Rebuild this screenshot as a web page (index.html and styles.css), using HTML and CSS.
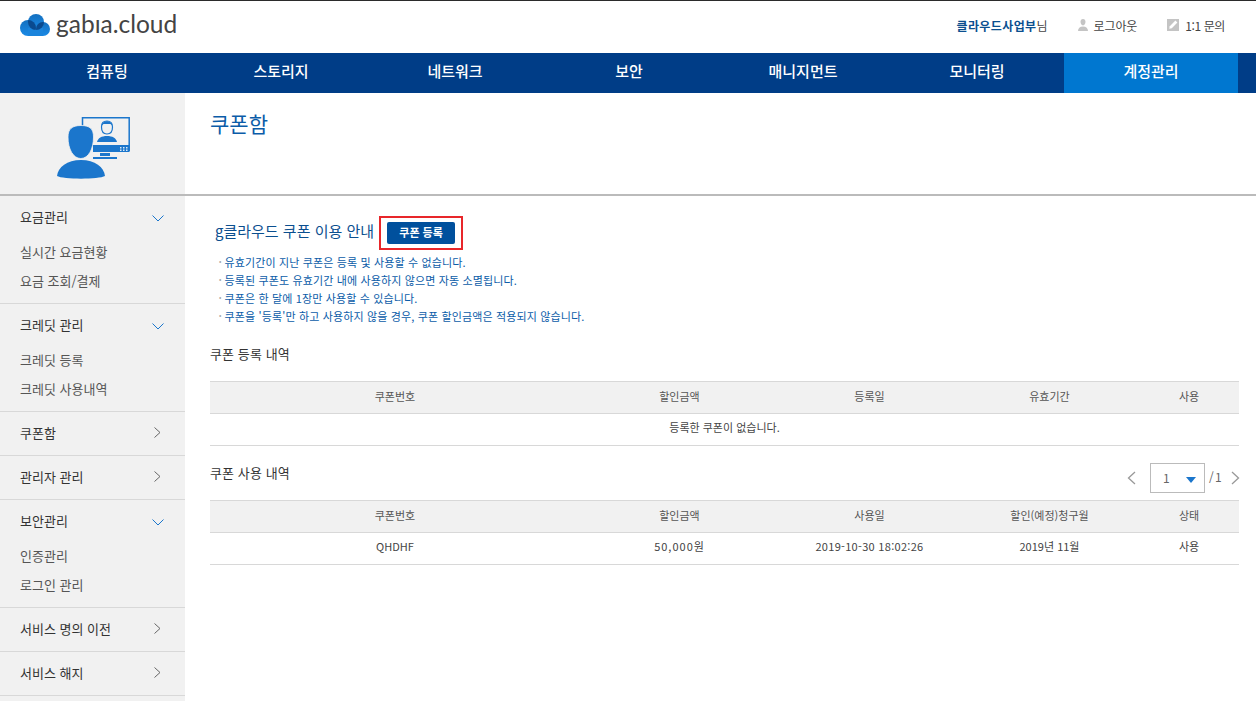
FILE: index.html
```html
<!DOCTYPE html>
<html lang="ko">
    <head>
        <meta charset="utf-8">
        <title>쿠폰함</title>
        <link rel="stylesheet" href="styles.css">
    </head>
    <body>

        <header class="header">
            <a class="logo">
                <svg class="logo-mark" width="30" height="22" viewBox="0 0 30 22">
                    <defs>
                        <linearGradient id="cloudFill" x1="0" y1="0" x2="0" y2="1">
                            <stop offset="0" stop-color="#1470c0"/>
                            <stop offset="1" stop-color="#1a8ae6"/>
                        </linearGradient>
                        <clipPath id="clipLeft"><circle cx="8" cy="14" r="8"/></clipPath>
                        <clipPath id="clipRight"><circle cx="23" cy="15" r="7"/></clipPath>
                    </defs>
                    <circle cx="16" cy="8" r="8" fill="url(#cloudFill)"/>
                    <circle cx="8" cy="14" r="8" fill="url(#cloudFill)"/>
                    <circle cx="23" cy="15" r="7" fill="url(#cloudFill)"/>
                    <rect x="8" y="14" width="15" height="8" fill="#1a84dc"/>
                    <circle cx="16" cy="8" r="8" fill="#0a4a8f" clip-path="url(#clipLeft)"/>
                    <circle cx="16" cy="8" r="8" fill="#0a4a8f" clip-path="url(#clipRight)"/>
                </svg>
                <span class="logo-text">gabıa.cloud</span>
            </a>
            <div class="util">
                <span class="util-user"><b>클라우드사업부</b>님</span>
                <span class="util-link">
                    <svg width="10" height="12" viewBox="0 0 10 12"><path d="M5 0c1.600 0 2.500 1.100 2.500 2.800S6.500 6.500 5 6.500 2.500 4.500 2.500 2.800 3.400 0 5 0zM0 12c0-2.600 1.800-4.600 5-4.600s5 2 5 4.600z" fill="#c4c4c4"/></svg>
                    로그아웃
                </span>
                <span class="util-link tight">
                    <svg width="12" height="12" viewBox="0 0 12 12"><path d="M0 0h12v12H0z" fill="#c4c4c4"/><path d="M2.200 9.800l.6-2.600 5.600-5.600 2 2-5.600 5.600z" fill="#fff"/></svg>
                    1:1 문의
                </span>
            </div>
        </header>

        <nav class="gnb">
            <a>컴퓨팅</a>
            <a>스토리지</a>
            <a>네트워크</a>
            <a>보안</a>
            <a>매니지먼트</a>
            <a>모니터링</a>
            <a class="active">계정관리</a>
        </nav>

        <div class="page-head">
            <div class="page-icon">
                <svg width="73" height="62" viewBox="0 0 73 62">
                    <path d="M25.500 10V.8h46.700V34" fill="none" stroke="#1b76cc" stroke-width="1.500"/>
                    <rect x="36" y="28" width="36.500" height="7" fill="#1b76cc"/>
                    <path d="M63 30h1.500v1.500H63zM66 30h1.500v1.500H66zM69 30h1.500v1.500H69zM63 32.500h1.500V34H63zM66 32.500h1.500V34H66zM69 32.500h1.500V34H69z" fill="#dbe9f6"/>
                    <rect x="43" y="36" width="10" height="3" fill="#1b76cc"/>
                    <rect x="36" y="40" width="24" height="2" fill="#1b76cc"/>
                    <path d="M44.500 10c0-4 1.800-6 5.500-6s5.500 2 5.500 6-1.800 7-5.500 7-5.500-3-5.500-7z" fill="none" stroke="#1b76cc" stroke-width="1.200"/>
                    <path d="M44.500 9c.5-6.500 10.500-6.500 11 0l-2-2h-7z" fill="#1b76cc"/>
                    <path d="M40 25c1-4 4.500-6 10-6s9 2 10 6z" fill="#1b76cc"/>
                    <path d="M11 20c0-8 4-11.500 13-11.500S36.500 12 36.500 20c0 12-5 21.500-12.700 21.500S11 32 11 20z" fill="#1b76cc" stroke="#f1f1f1" stroke-width=".8"/>
                    <path d="M0 59c1-9 10-16 24-16s23 7 24 16c-6 3.500-42 3.500-48 0z" fill="#1b76cc"/>
                </svg>
            </div>
            <h1 class="page-title">쿠폰함</h1>
        </div>

        <div class="body-wrap">
            <aside class="side">
                <div class="side-group">
                    <div class="side-title">요금관리<svg class="arrow" width="12" height="7" viewBox="0 0 12 7"><path d="M.5.500L6 6l5.500-5.500" fill="none" stroke="#1b76cc"/></svg></div>
                    <ul class="side-sub">
                        <li>실시간 요금현황</li>
                        <li>요금 조회/결제</li>
                    </ul>
                </div>
                <div class="side-group">
                    <div class="side-title">크레딧 관리<svg class="arrow" width="12" height="7" viewBox="0 0 12 7"><path d="M.5.500L6 6l5.500-5.500" fill="none" stroke="#1b76cc"/></svg></div>
                    <ul class="side-sub">
                        <li>크레딧 등록</li>
                        <li>크레딧 사용내역</li>
                    </ul>
                </div>
                <div class="side-group">
                    <div class="side-title">쿠폰함<svg class="arrow right" width="7" height="11" viewBox="0 0 7 11"><path d="M.5.500l5.500 5-5.500 5" fill="none" stroke="#666"/></svg></div>
                </div>
                <div class="side-group">
                    <div class="side-title">관리자 관리<svg class="arrow right" width="7" height="11" viewBox="0 0 7 11"><path d="M.5.500l5.500 5-5.500 5" fill="none" stroke="#666"/></svg></div>
                </div>
                <div class="side-group">
                    <div class="side-title">보안관리<svg class="arrow" width="12" height="7" viewBox="0 0 12 7"><path d="M.5.500L6 6l5.500-5.500" fill="none" stroke="#1b76cc"/></svg></div>
                    <ul class="side-sub">
                        <li>인증관리</li>
                        <li>로그인 관리</li>
                    </ul>
                </div>
                <div class="side-group">
                    <div class="side-title">서비스 명의 이전<svg class="arrow right" width="7" height="11" viewBox="0 0 7 11"><path d="M.5.500l5.500 5-5.500 5" fill="none" stroke="#666"/></svg></div>
                </div>
                <div class="side-group">
                    <div class="side-title">서비스 해지<svg class="arrow right" width="7" height="11" viewBox="0 0 7 11"><path d="M.5.500l5.500 5-5.500 5" fill="none" stroke="#666"/></svg></div>
                </div>
            </aside>

            <main class="content">
                <div class="guide-head">
                    <h2 class="guide-title">g클라우드 쿠폰 이용 안내</h2>
                    <div class="btn-mark"><button class="btn">쿠폰 등록</button></div>
                </div>
                <ul class="guide-list">
                    <li>유효기간이 지난 쿠폰은 등록 및 사용할 수 없습니다.</li>
                    <li>등록된 쿠폰도 유효기간 내에 사용하지 않으면 자동 소멸됩니다.</li>
                    <li>쿠폰은 한 달에 1장만 사용할 수 있습니다.</li>
                    <li>쿠폰을 '등록'만 하고 사용하지 않을 경우, 쿠폰 할인금액은 적용되지 않습니다.</li>
                </ul>

                <h3 class="section-title first">쿠폰 등록 내역</h3>
                <table class="list">
                    <thead>
                        <tr>
                            <th class="col-no">쿠폰번호</th>
                            <th class="col-amount">할인금액</th>
                            <th class="col-date">등록일</th>
                            <th class="col-term">유효기간</th>
                            <th>사용</th>
                        </tr>
                    </thead>
                    <tbody>
                        <tr>
                            <td colspan="5">등록한 쿠폰이 없습니다.</td>
                        </tr>
                    </tbody>
                </table>

                <div class="section-row">
                    <h3 class="section-title">쿠폰 사용 내역</h3>
                    <div class="pager">
                        <svg width="9" height="14" viewBox="0 0 9 14"><path d="M8 1L1.500 7 8 13" fill="none" stroke="#999" stroke-width="1.300"/></svg>
                        <div class="pager-select">1<span class="caret"></span></div>
                        <span class="pager-total">/ 1</span>
                        <svg width="9" height="14" viewBox="0 0 9 14"><path d="M1 1l6.500 6L1 13" fill="none" stroke="#999" stroke-width="1.300"/></svg>
                    </div>
                </div>
                <table class="list">
                    <thead>
                        <tr>
                            <th class="col-no">쿠폰번호</th>
                            <th class="col-amount">할인금액</th>
                            <th class="col-date">사용일</th>
                            <th class="col-term">할인(예정)청구월</th>
                            <th>상태</th>
                        </tr>
                    </thead>
                    <tbody>
                        <tr>
                            <td>QHDHF</td>
                            <td class="amount">50,000원</td>
                            <td class="date">2019-10-30 18:02:26</td>
                            <td>2019년 11월</td>
                            <td>사용</td>
                        </tr>
                    </tbody>
                </table>
            </main>
        </div>

    </body>
</html>
```

FILE: styles.css
```css
* {
    box-sizing: border-box;
}
html, body {
    margin: 0;
    height: 701px;
    overflow: hidden;
}
body {
    font-family: "Noto Sans CJK KR", "Noto Sans", sans-serif;
    font-size: 12px;
    color: #444;
    background-color: #fff;
}

/** Header **/
.header {
    display: flex;
    align-items: center;
    justify-content: space-between;
    height: 53px;
    border-top: 1px solid #2b2b2b;
    padding: 0 31px 4px 20px;
}
.logo {
    display: flex;
    align-items: center;
    gap: 6px;
}
.logo-text {
    padding-bottom: 3px;
    font-family: "Lato", sans-serif;
    font-size: 24.5px;
    line-height: 26px;
    color: #444;
}
.util {
    display: flex;
    align-items: center;
    gap: 30px;
    letter-spacing: -0.1px;
}
.util-user b {
    font-weight: 700;
    letter-spacing: 0.4px;
    color: #0b4f8f;
}
.util-link {
    display: flex;
    align-items: center;
    gap: 6px;
}
.util-link.tight {
    letter-spacing: -0.4px;
}

/** Main navigation **/
.gnb {
    display: grid;
    grid-template-columns: repeat(7, 174px);
    height: 40px;
    padding-left: 20px;
    background-color: #003d87;
}
.gnb a {
    font-size: 15px;
    font-weight: 500;
    line-height: 36px;
    text-align: center;
    color: #fff;
}
.gnb a.active {
    background-color: #0077d0;
}

/** Page head **/
.page-head {
    display: flex;
    height: 103px;
    border-bottom: 2px solid #bbb;
}
.page-icon {
    width: 185px;
    padding: 24px 0 0 57px;
    background-color: #f1f1f1;
}
.page-title {
    margin: 12px 0 0 25px;
    font-size: 21px;
    font-weight: 400;
    line-height: 36px;
    color: #0b5ca8;
}

/** Layout **/
.body-wrap {
    display: flex;
    height: 505px;
}

/** Side menu **/
.side {
    flex: none;
    width: 185px;
    background-color: #f1f1f1;
}
.side-group {
    border-bottom: 1px solid #d8d8d8;
}
.side-title {
    display: flex;
    align-items: center;
    justify-content: space-between;
    height: 43px;
    padding: 0 21px 2px 20px;
    font-size: 13px;
    color: #333;
}
.side-title .arrow {
    margin-top: 4px;
}
.side-title .arrow.right {
    margin-top: 0;
    margin-right: 3px;
}
.side-sub {
    list-style-type: none;
    margin: -2px 0 0;
    padding: 0 0 8px 20px;
    font-size: 13px;
    line-height: 29px;
    color: #555;
}

/** Content **/
.content {
    flex: 1;
    padding: 0 17px 0 25px;
}
.guide-head {
    display: flex;
    align-items: center;
    gap: 5px;
    margin: 20px 0 0 5px;
}
.guide-title {
    margin: 0;
    padding-bottom: 6px;
    font-size: 15px;
    font-weight: 400;
    color: #0b4f8f;
}
.btn-mark {
    border: 2px solid #e8262a;
    padding: 4px 6px;
}
.btn {
    display: block;
    width: 68px;
    height: 22px;
    border: 0;
    border-radius: 2px;
    padding: 0 0 2px;
    font-family: inherit;
    font-size: 11px;
    font-weight: 700;
    color: #fff;
    background-color: #00509d;
}
.guide-list {
    list-style-type: none;
    margin: 3px 0 0;
    padding: 0 0 0 9px;
    font-size: 11px;
    line-height: 18px;
    letter-spacing: 0.14px;
    color: #0b5ca8;
}
.guide-list li:before {
    content: "\2022";
    margin-right: 3px;
    color: #aaa;
    font-size: 7px;
    line-height: 0;
    vertical-align: 3px;
}

/** Sections **/
.section-title {
    margin: 0;
    font-size: 13px;
    font-weight: 400;
    letter-spacing: 0.1px;
    color: #333;
}
.section-title.first {
    margin: 19px 0 18px;
}
.section-row {
    display: flex;
    align-items: center;
    justify-content: space-between;
    height: 54px;
    padding-bottom: 2px;
}
.pager {
    display: flex;
    align-items: center;
    margin: 12px -1px 0 0;
    color: #666;
}
.pager-select {
    position: relative;
    width: 55px;
    height: 30px;
    margin: 0 4px 0 14px;
    border: 1px solid #bbb;
    padding-left: 12px;
    line-height: 28px;
}
.caret {
    position: absolute;
    top: 13px;
    right: 8px;
    border-top: 6px solid #1b76cc;
    border-left: 5px solid transparent;
    border-right: 5px solid transparent;
}
.pager-total {
    width: 12px;
    margin-right: 10px;
    padding-bottom: 3px;
    white-space: nowrap;
    word-spacing: -2px;
}

/** Tables **/
.list {
    width: 100%;
    border-collapse: collapse;
    table-layout: fixed;
    font-size: 11px;
}
.list th {
    height: 32px;
    border-top: 1px solid #d8d8d8;
    border-bottom: 1px solid #d8d8d8;
    padding: 0 0 4px;
    font-weight: 400;
    color: #555;
    background-color: #f1f1f1;
}
.list td {
    height: 32px;
    border-bottom: 1px solid #d8d8d8;
    padding: 0 0 6px;
    text-align: center;
    color: #444;
}
.list td.amount {
    letter-spacing: 1px;
}
.list td.date {
    letter-spacing: 0.3px;
}
.col-no {
    width: 370px;
}
.col-amount {
    width: 199px;
}
.col-date {
    width: 181px;
}
.col-term {
    width: 179px;
}
```
